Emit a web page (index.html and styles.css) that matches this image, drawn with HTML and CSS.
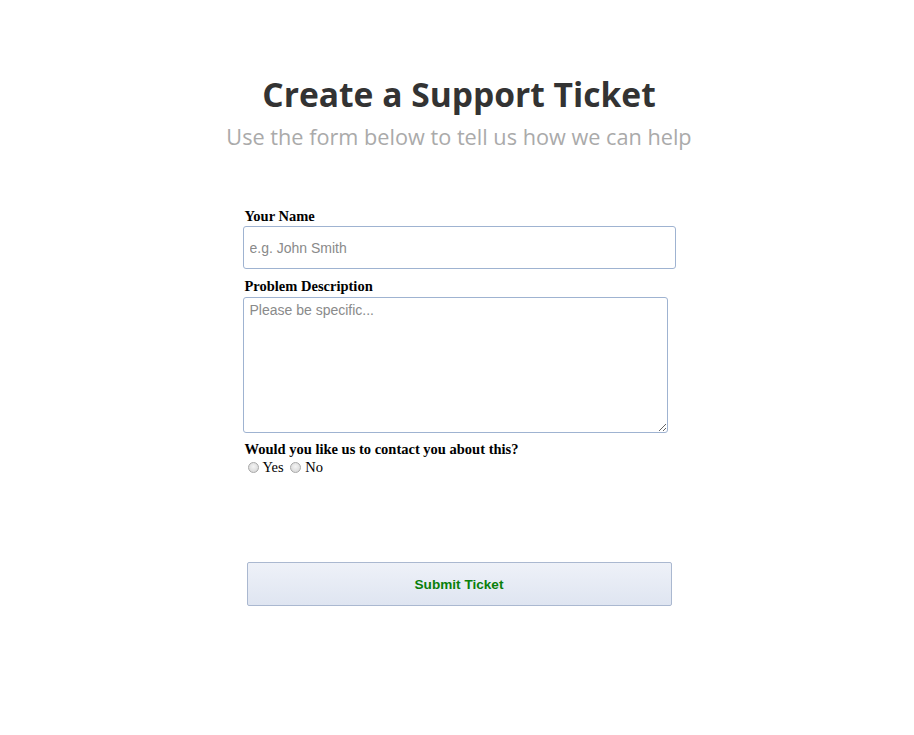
FILE: index.html
```html
<!DOCTYPE html>
<html lang="en">
  <head>
    <title>Create a Support Ticket</title>
    <meta charset="UTF-8">
    <meta name="viewport" content="width=device-width, initial-scale=1.0">
    <link rel="stylesheet" href="styles.css">
  </head>
  <body>
    <div class="header">
      <h1>Create a Support Ticket</h1>
      <p class="subtitle">Use the form below to tell us how we can help</p>
    </div>

    <form class="ticket-form">
      <label class="field-label" for="name">Your Name</label>
      <input class="text-input" type="text" id="name" placeholder="e.g. John Smith">

      <label class="field-label" for="desc">Problem Description</label>
      <textarea class="text-area" id="desc" placeholder="Please be specific..."></textarea>

      <div class="field-label contact-label">Would you like us to contact you about this?</div>
      <div class="radios">
        <label><input type="radio" name="contact" value="yes">Yes</label>
        <label><input type="radio" name="contact" value="no">No</label>
      </div>

      <button class="submit-button" type="button">Submit Ticket</button>
    </form>
  </body>
</html>
```

FILE: styles.css
```css
body {
  margin: 0;
  padding-left: 4px;
  background-color: #fff;
  font-family: "Liberation Serif", serif;
}

.header {
  text-align: center;
  padding-top: 72px;
}

.header h1 {
  margin: 0;
  font-family: "Open Sans", sans-serif;
  font-weight: 700;
  font-size: 33.6px;
  line-height: 44px;
  color: #333;
}

.subtitle {
  margin: 6px 0 0;
  font-family: "Open Sans", sans-serif;
  font-size: 21.7px;
  line-height: 30px;
  color: #aaa;
}

.ticket-form {
  width: 433px;
  margin: 56px auto 0;
  display: flex;
  flex-direction: column;
  align-items: flex-start;
}

.field-label {
  font-weight: bold;
  font-size: 14.5px;
  line-height: 17px;
  color: #000;
  margin-left: 2px;
}

.text-input {
  box-sizing: border-box;
  width: 433px;
  height: 43px;
  margin: 1px 0 9px;
  padding: 0 6px;
  border: 1px solid #9fb3d1;
  border-radius: 3px;
  font-family: "Liberation Sans", sans-serif;
  font-size: 14px;
}

.text-area {
  box-sizing: border-box;
  width: 425px;
  height: 136px;
  margin: 2px 0 8px;
  padding: 4px 6px;
  border: 1px solid #9fb3d1;
  border-radius: 3px;
  font-family: "Liberation Sans", sans-serif;
  font-size: 14px;
}

.text-input::placeholder, .text-area::placeholder {
  color: #8a8a8a;
}

.radios {
  font-size: 14.5px;
  line-height: 18px;
  margin-left: 2px;
}

.radios label {
  margin-right: 0;
}

.radios input {
  appearance: none;
  box-sizing: border-box;
  display: inline-block;
  vertical-align: -1px;
  margin: 0 4px 0 3px;
  width: 11px;
  height: 11px;
  border: 1px solid #a8a8a8;
  border-radius: 50%;
  background: radial-gradient(circle at 50% 40%, #f4f4f4, #d2d2d2);
}

.submit-button {
  align-self: center;
  width: 425px;
  height: 44px;
  margin-top: 86px;
  background: linear-gradient(#eef1f8, #dfe5f1);
  border: 1px solid #aab8d0;
  border-radius: 2px;
  color: #0a7f0a;
  font-family: "Liberation Sans", sans-serif;
  font-weight: bold;
  font-size: 13.6px;
}
```
